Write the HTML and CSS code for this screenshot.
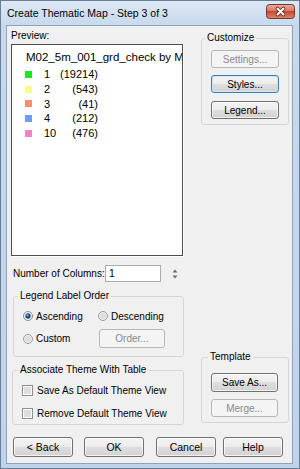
FILE: index.html
```html
<!DOCTYPE html>
<html>
<head>
<meta charset="utf-8">
<link rel="stylesheet" href="styles.css">
</head>
<body>
<div class="window">
  <div class="titlebar">
    <span class="title">Create Thematic Map - Step 3 of 3</span>
    <svg class="close" width="29" height="15" viewBox="0 0 29 15">
      <defs>
        <linearGradient id="cg" x1="0" y1="0" x2="0" y2="1">
          <stop offset="0" stop-color="#eab0a3"/>
          <stop offset="0.45" stop-color="#d97865"/>
          <stop offset="0.5" stop-color="#c7472f"/>
          <stop offset="1" stop-color="#d88a70"/>
        </linearGradient>
      </defs>
      <rect x="0.5" y="0.5" width="28" height="14" rx="3" fill="url(#cg)" stroke="#74342a"/>
      <path d="M11.5 4.5 L17.5 10.5 M17.5 4.5 L11.5 10.5" stroke="#5a2218" stroke-width="3.6" stroke-linecap="round"/>
      <path d="M11.5 4.5 L17.5 10.5 M17.5 4.5 L11.5 10.5" stroke="#ffffff" stroke-width="2" stroke-linecap="round"/>
    </svg>
  </div>
  <div class="client">
    <div class="main">
      <div class="col-left">
        <div class="preview-label">Preview:</div>
        <div class="preview">
          <div class="pv-title">M02_5m_001_grd_check by MAP</div>
          <div class="pv-row"><span class="sw sw1"></span><span class="pv-val">1</span><span class="pv-cnt">(19214)</span></div>
          <div class="pv-row"><span class="sw sw2"></span><span class="pv-val">2</span><span class="pv-cnt">(543)</span></div>
          <div class="pv-row"><span class="sw sw3"></span><span class="pv-val">3</span><span class="pv-cnt">(41)</span></div>
          <div class="pv-row"><span class="sw sw4"></span><span class="pv-val">4</span><span class="pv-cnt">(212)</span></div>
          <div class="pv-row"><span class="sw sw5"></span><span class="pv-val">10</span><span class="pv-cnt">(476)</span></div>
        </div>
        <div class="cols-row">
          <span class="cols-label">Number of Columns:</span>
          <span class="textbox">1</span>
          <svg class="spin" width="8" height="17" viewBox="0 0 8 17">
            <polygon points="1.5,7.5 4,4.5 6.5,7.5" fill="#6a6a6a"/>
            <polygon points="1.5,10.5 4,13.5 6.5,10.5" fill="#6a6a6a"/>
          </svg>
        </div>
        <fieldset class="group order">
          <legend>Legend Label Order</legend>
          <div class="opt-row r1">
            <span class="opt w75">
              <svg class="radio" width="10" height="10" viewBox="0 0 10 10"><circle cx="5" cy="5" r="4.5" fill="#f1f1f1" stroke="#8a8b8c"/><circle cx="5" cy="5" r="2.7" fill="#1d5186"/><circle cx="4.4" cy="4.3" r="1" fill="#7fb5e4"/></svg>
              <span>Ascending</span>
            </span>
            <span class="opt">
              <svg class="radio" width="10" height="10" viewBox="0 0 10 10"><circle cx="5" cy="5" r="4.5" fill="#f1f1f1" stroke="#9a9b9c"/><circle cx="5" cy="5" r="3" fill="#dedede"/></svg>
              <span>Descending</span>
            </span>
          </div>
          <div class="opt-row r2">
            <span class="opt w76">
              <svg class="radio" width="10" height="10" viewBox="0 0 10 10"><circle cx="5" cy="5" r="4.5" fill="#f1f1f1" stroke="#9a9b9c"/><circle cx="5" cy="5" r="3" fill="#dedede"/></svg>
              <span>Custom</span>
            </span>
            <span class="btn disabled order-btn">Order...</span>
          </div>
        </fieldset>
        <fieldset class="group assoc">
          <legend>Associate Theme With Table</legend>
          <div class="chk-row c1">
            <svg class="chk" width="11" height="11" viewBox="0 0 11 11"><rect x="0.5" y="0.5" width="10" height="10" fill="#fbfbfb" stroke="#8e8f8f"/><rect x="2" y="2" width="7" height="7" fill="#dcdee1"/></svg>
            <span>Save As Default Theme View</span>
          </div>
          <div class="chk-row c2">
            <svg class="chk" width="11" height="11" viewBox="0 0 11 11"><rect x="0.5" y="0.5" width="10" height="10" fill="#fbfbfb" stroke="#8e8f8f"/><rect x="2" y="2" width="7" height="7" fill="#dcdee1"/></svg>
            <span>Remove Default Theme View</span>
          </div>
        </fieldset>
      </div>
      <div class="col-right">
        <fieldset class="group customize">
          <legend>Customize</legend>
          <span class="btn disabled cb cb1">Settings...</span>
          <span class="btn focused cb cb2">Styles...</span>
          <span class="btn cb cb3">Legend...</span>
        </fieldset>
        <fieldset class="group template">
          <legend>Template</legend>
          <span class="btn tb tb1">Save As...</span>
          <span class="btn disabled tb tb2">Merge...</span>
        </fieldset>
      </div>
    </div>
    <div class="footer">
      <span class="btn fbtn">&lt; Back</span>
      <span class="btn fbtn f2">OK</span>
      <span class="btn fbtn f3">Cancel</span>
      <span class="btn fbtn f4">Help</span>
    </div>
  </div>
</div>
</body>
</html>
```
FILE: styles.css
```css
html, body {
  margin: 0;
  padding: 0;
}
body {
  width: 300px;
  height: 469px;
  overflow: hidden;
  background: #ffffff;
}
.window {
  box-sizing: border-box;
  width: 300px;
  height: 469px;
  border: 1px solid #6a7f96;
  background: linear-gradient(to bottom, #dde8f5 0px, #c8d9ed 24px, #bfd3ea 100%);
  display: flex;
  flex-direction: column;
}
.titlebar {
  height: 24px;
  flex: none;
  display: flex;
  align-items: center;
  justify-content: space-between;
  padding-left: 6px;
}
.title {
  font: 10.5px "Liberation Sans", Arial, sans-serif;
  color: #000;
}
.close {
  align-self: flex-start;
  margin-top: 3px;
  margin-right: 4px;
}
.client {
  flex: 1;
  margin: 0 6px 4px 5px;
  border: 1px solid #8da2bb;
  background: #f0f0f0;
  display: flex;
  flex-direction: column;
  padding-bottom: 6px;
  font: 10px "Liberation Sans", Arial, sans-serif;
  color: #000;
}
.main {
  display: flex;
  padding-left: 4px;
}
.col-left {
  width: 173px;
  display: flex;
  flex-direction: column;
}
.col-right {
  width: 88px;
  margin-left: 17px;
  display: flex;
  flex-direction: column;
}
.preview-label {
  margin-top: 4px;
  line-height: 12px;
}
.preview {
  box-sizing: border-box;
  margin-top: 2px;
  width: 172px;
  height: 212px;
  background: #ffffff;
  border: 1px solid #4e4e4e;
  box-shadow: 1px 1px 0 #ffffff;
  overflow: hidden;
  white-space: nowrap;
  padding: 5px 0 0 13px;
}
.pv-title {
  font-size: 11.5px;
  line-height: 14px;
  padding-left: 1px;
}
.pv-row {
  display: flex;
  align-items: center;
  height: 14.7px;
  font-size: 11px;
}
.pv-row:first-of-type {
  margin-top: 3px;
}
.pv-title + .pv-row {
  margin-top: 3px;
}
.sw {
  width: 7px;
  height: 7px;
  margin-right: 12px;
  flex: none;
}
.sw1 { background: #1fe61f; }
.sw2 { background: #fcfc88; }
.sw3 { background: #f4906c; }
.sw4 { background: #6d9ef0; }
.sw5 { background: #f282c2; }
.pv-val {
  width: 16px;
}
.pv-cnt {
  width: 38px;
  text-align: right;
}
.cols-row {
  display: flex;
  align-items: center;
  margin-top: 9px;
  margin-left: 2px;
  height: 17px;
}
.cols-label {
  width: 92px;
}
.textbox {
  box-sizing: border-box;
  width: 56px;
  height: 17px;
  background: #ffffff;
  border: 1px solid #abadb3;
  padding-left: 3px;
  line-height: 15px;
  font-size: 10.5px;
}
.spin {
  margin-left: 10px;
}
.group {
  box-sizing: border-box;
  margin: 0;
  padding: 0;
  min-width: 0;
  border: 1px solid #d3d7da;
  border-radius: 3px;
  display: flex;
  flex-direction: column;
}
.group legend {
  padding: 0 2px;
  line-height: 12px;
  font-size: 10px;
}
.order {
  margin-top: 8px;
  margin-left: 2px;
  width: 171px;
  padding-bottom: 8px;
}
.order legend {
  margin-left: 4px;
}
.opt-row {
  display: flex;
  align-items: center;
  margin-left: 9px;
}
.r1 {
  margin-top: 6px;
  height: 16px;
}
.r2 {
  margin-top: 5px;
  height: 19px;
}
.opt {
  display: flex;
  align-items: center;
  gap: 3px;
}
.w75 { width: 75px; }
.w76 { width: 76px; }
.assoc {
  margin-top: 7px;
  margin-left: 1px;
  width: 172px;
  padding-bottom: 4px;
}
.assoc legend {
  margin-left: 5px;
}
.chk-row {
  display: flex;
  align-items: center;
  gap: 4px;
  margin-left: 9px;
  height: 13px;
}
.c1 { margin-top: 8px; }
.c2 { margin-top: 10px; }
.btn {
  box-sizing: border-box;
  display: flex;
  align-items: center;
  justify-content: center;
  border: 1px solid #707070;
  border-radius: 3px;
  background: linear-gradient(to bottom, #f4f4f4 0%, #ececec 50%, #dedede 50%, #d2d2d2 100%);
  box-shadow: inset 0 0 0 1px rgba(255,255,255,0.7);
  font-size: 10px;
  color: #000;
}
.btn.disabled {
  border-color: #b4b8bb;
  background: #f4f4f4;
  box-shadow: none;
  color: #8a8a8a;
}
.btn.focused {
  border-color: #3c7fb1;
  box-shadow: inset 0 0 0 1px #c8e6f8;
}
.order-btn {
  width: 66px;
  height: 19px;
}
.customize {
  margin-top: 6px;
  width: 88px;
  padding-bottom: 5px;
}
.customize legend {
  margin-left: 3px;
}
.cb {
  margin-left: 9px;
  width: 68px;
  height: 18px;
}
.cb1 { margin-top: 6px; }
.cb2 { margin-top: 7px; }
.cb3 { margin-top: 8px; }
.template {
  margin-top: auto;
  margin-bottom: 2px;
  width: 88px;
  padding-bottom: 5px;
}
.template legend {
  margin-left: 6px;
}
.tb {
  margin-left: 9px;
  width: 67px;
}
.tb1 { margin-top: 10px; height: 19px; }
.tb2 { margin-top: 7px; height: 18px; }
.footer {
  display: flex;
  margin-top: 12px;
  padding-left: 6px;
}
.fbtn {
  width: 60px;
  height: 20px;
  font-size: 10.5px;
}
.f2 { margin-left: 11px; }
.f3 { margin-left: 12px; }
.f4 { margin-left: 7px; }
```
